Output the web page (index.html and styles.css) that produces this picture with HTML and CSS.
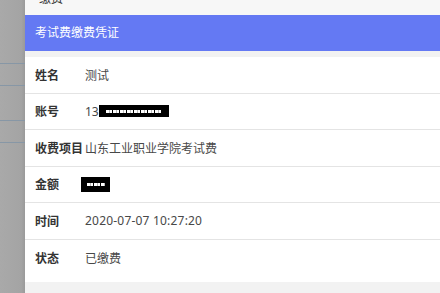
FILE: index.html
```html
<!DOCTYPE html>
<html lang="zh-CN">
<head>
    <meta charset="UTF-8">
    <meta name="viewport" content="width=device-width, initial-scale=1.0">
    <title>考试费缴费凭证</title>
    <link rel="stylesheet" href="styles.css">
</head>
<body>
    <aside class="backdrop">
        <div class="rule rule-a"></div>
        <div class="rule rule-b"></div>
        <div class="rule rule-c"></div>
        <div class="rule rule-b"></div>
    </aside>
    <main class="sheet">
        <div class="crumb"><span>缴费</span></div>
        <div class="title">考试费缴费凭证</div>
        <div class="card">
            <div class="row">
                <span class="label">姓名</span>
                <span class="value">测试</span>
            </div>
            <div class="row">
                <span class="label">账号</span>
                <span class="value">13<span class="mask mask-long"><i></i></span></span>
            </div>
            <div class="row">
                <span class="label">收费项目</span>
                <span class="value">山东工业职业学院考试费</span>
            </div>
            <div class="row">
                <span class="label">金额</span>
                <span class="value"><span class="mask mask-short"><i></i></span></span>
            </div>
            <div class="row">
                <span class="label">时间</span>
                <span class="value digits">2020-07-07 10:27:20</span>
            </div>
            <div class="row">
                <span class="label">状态</span>
                <span class="value">已缴费</span>
            </div>
        </div>
    </main>
</body>
</html>
```

FILE: styles.css
```css
body {
    font-family: 'Noto Sans', 'Noto Sans CJK SC', sans-serif;
    font-size: 12px;
    margin: 0;
    height: 293px;
    display: flex;
    overflow: hidden;
    background-color: #f2f2f2;
}
.backdrop {
    width: 25px;
    flex-shrink: 0;
    background: linear-gradient(to right, #a9a9a9, #a4a4a4 85%, #9a9a9a);
    display: flex;
    flex-direction: column;
}
.rule {
    height: 1px;
    background-color: #8797a6;
}
.rule-a {
    margin-top: 63px;
}
.rule-b {
    margin-top: 21px;
}
.rule-c {
    margin-top: 34px;
}
.sheet {
    flex: 1;
    background-color: #f2f2f2;
}
.crumb {
    height: 15px;
    background-color: #f7f7f7;
    padding-left: 14px;
    overflow: hidden;
    color: #333;
}
.crumb span {
    display: block;
    line-height: 12px;
    margin-top: -7px;
}
.title {
    height: 36px;
    line-height: 36px;
    background-color: #6479f3;
    color: white;
    padding-left: 10px;
    margin-bottom: 6px;
}
.card {
    background-color: white;
    padding-bottom: 6px;
}
.row {
    height: 36.5px;
    box-sizing: border-box;
    display: flex;
    align-items: center;
    padding-left: 10px;
    border-bottom: 1px solid #e4e4e4;
}
.row:last-child {
    border-bottom: none;
}
.label {
    width: 50px;
    font-weight: bold;
    color: #333;
}
.value {
    color: #484848;
    display: flex;
    align-items: center;
}
.digits {
    letter-spacing: 0.2px;
}
.mask {
    background-color: black;
    display: flex;
    align-items: center;
    justify-content: center;
}
.mask i {
    display: block;
    height: 3px;
    background: repeating-linear-gradient(to right, #fff 0 3px, #bbb 3px 4px, #fff 4px 6px, transparent 6px 7px);
}
.mask-long {
    width: 70px;
    height: 12px;
}
.mask-long i {
    width: 56px;
}
.mask-short {
    width: 29px;
    height: 15px;
    margin-left: -4px;
}
.mask-short i {
    width: 18px;
}
```
